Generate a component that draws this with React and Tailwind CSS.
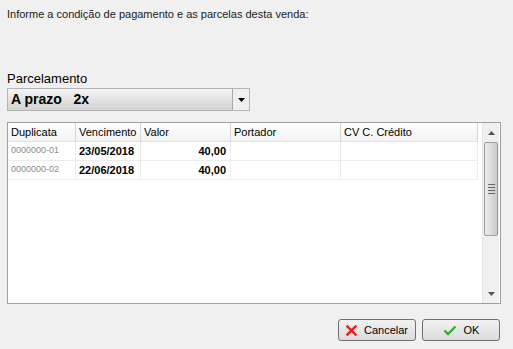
import React from "react";

const cols = [
  { label: "Duplicata", w: 68 },
  { label: "Vencimento", w: 65 },
  { label: "Valor", w: 90 },
  { label: "Portador", w: 110 },
  { label: "CV C. Crédito", w: 137 },
];

const rows = [
  ["0000000-01", "23/05/2018", "40,00"],
  ["0000000-02", "22/06/2018", "40,00"],
];

export default function App() {
  return (
    <div
      className="w-[513px] h-[349px] bg-[#f0f0f0] flex flex-col pl-[7px] text-black overflow-hidden"
      style={{ fontFamily: '"Liberation Sans", Arial, sans-serif' }}
    >
      <div className="mt-[7px] h-[14px] text-[11px] leading-[14px] text-[#1a1a1a]">
        Informe a condição de pagamento e as parcelas desta venda:
      </div>
      <div className="mt-[50px] h-[15px] text-[13px] leading-[15px]">Parcelamento</div>
      <div className="mt-[2px] w-[243px] h-[23px] flex border border-[#b4b4b4] bg-gradient-to-b from-[#f4f4f4] to-[#d2d2d2]">
        <div className="flex-1 pl-[3px] text-[14px] font-bold leading-[21px] whitespace-pre">A prazo   2x</div>
        <div className="w-[17px] h-full border-l border-[#a8a8a8] bg-[#f0f0f0] flex items-center justify-center">
          <svg width="7" height="4" viewBox="0 0 7 4">
            <path d="M0 0H7L3.5 4Z" fill="#000" />
          </svg>
        </div>
      </div>
      <div className="mt-[11px] w-[494px] h-[182px] border border-[#a0a0a0] bg-white flex">
        <div className="flex-1 flex flex-col">
          <div className="flex h-[19px] border-b border-[#e3e3e3] bg-gradient-to-b from-white to-[#f2f2f2] w-[470px]">
            {cols.map((c) => (
              <div
                key={c.label}
                className="border-r border-[#d5d5d5] pl-[3px] text-[11px] leading-[18px] text-black"
                style={{ width: c.w }}
              >
                {c.label}
              </div>
            ))}
          </div>
          {rows.map((r) => (
            <div key={r[0]} className="flex h-[19px] border-b border-[#ececec] w-[470px]">
              <div className="w-[68px] border-r border-[#ececec] pl-[3px] text-[9px] leading-[16px] text-[#8a8a8a]">
                {r[0]}
              </div>
              <div className="w-[65px] border-r border-[#ececec] pl-[3px] text-[11px] font-bold leading-[18px]">
                {r[1]}
              </div>
              <div className="w-[90px] border-r border-[#ececec] pr-[4px] text-right text-[11px] font-bold leading-[18px]">
                {r[2]}
              </div>
              <div className="w-[110px] border-r border-[#ececec]" />
              <div className="w-[137px] border-r border-[#ececec]" />
            </div>
          ))}
        </div>
        <div className="w-[17px] h-full bg-[#f0f0f0] border-l border-[#e6e6e6] flex flex-col mr-[1px]">
          <div className="h-[19px] flex items-center justify-center">
            <svg width="7" height="4" viewBox="0 0 7 4">
              <path d="M3.5 0L7 4H0Z" fill="#555" />
            </svg>
          </div>
          <div className="mx-[1px] h-[94px] rounded-[2px] border border-[#9c9c9c] bg-gradient-to-r from-[#ececec] via-[#dcdcdc] to-[#c8c8c8] flex flex-col items-center justify-center gap-[2px]">
            <div className="w-[7px] h-px bg-[#666]" />
            <div className="w-[7px] h-px bg-[#666]" />
            <div className="w-[7px] h-px bg-[#666]" />
            <div className="w-[7px] h-px bg-[#666]" />
          </div>
          <div className="flex-1" />
          <div className="h-[19px] flex items-center justify-center">
            <svg width="7" height="4" viewBox="0 0 7 4">
              <path d="M0 0H7L3.5 4Z" fill="#555" />
            </svg>
          </div>
        </div>
      </div>
      <div className="mt-[15px] flex justify-end gap-[6px] pr-[13px]">
        <button className="w-[78px] h-[22px] rounded-[3px] border border-[#707070] bg-gradient-to-b from-[#f2f2f2] to-[#dcdcdc] flex items-center justify-center gap-[7px] text-[11px]">
          <svg width="11" height="11" viewBox="0 0 11 11">
            <path d="M1.5 1.5L9.5 9.5M9.5 1.5L1.5 9.5" stroke="#e01e1e" strokeWidth="2.4" strokeLinecap="square" />
          </svg>
          <span>Cancelar</span>
        </button>
        <button className="w-[78px] h-[22px] rounded-[3px] border border-[#707070] bg-gradient-to-b from-[#f2f2f2] to-[#dcdcdc] flex items-center justify-center gap-[7px] text-[11px]">
          <svg width="14" height="11" viewBox="0 0 14 11">
            <path d="M1.5 5.5L5 9L12.5 1.5" stroke="#2fb02f" strokeWidth="2.4" fill="none" />
          </svg>
          <span>OK</span>
        </button>
      </div>
    </div>
  );
}
